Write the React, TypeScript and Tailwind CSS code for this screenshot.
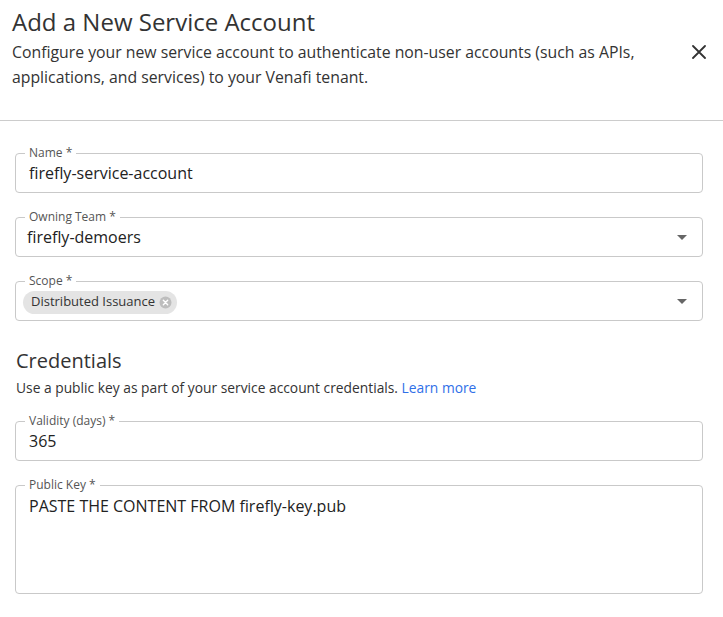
import React from "react";

function Field({
  label,
  children,
  heightClass = "h-[40px]",
  select = false,
}: {
  label: string;
  children: React.ReactNode;
  heightClass?: string;
  select?: boolean;
}) {
  return (
    <div className={`relative ml-[15px] mr-[20px] ${heightClass} rounded-[4px] border border-[#c9c9c9] flex items-center pl-[13px] pr-[14px]`}>
      <span className="absolute -top-[8px] left-[9px] bg-white px-[4px] text-[12px] leading-[14px] text-[#555]">
        {label}
      </span>
      <div className="flex-1 min-w-0">{children}</div>
      {select && (
        <svg width="10" height="5" viewBox="0 0 10 5" className="shrink-0 mr-[1px]">
          <path d="M0 0 L10 0 L5 5 Z" fill="#666" />
        </svg>
      )}
    </div>
  );
}

export default function App() {
  return (
    <div className="w-[723px] h-[617px] bg-white text-[#333] overflow-hidden" style={{ fontFamily: '"Open Sans", "Noto Sans", sans-serif' }}>
      <div className="flex pl-[12px] pr-[17px] pt-[5px]">
        <div className="flex-1">
          <h1 className="text-[24px] leading-[34px] font-normal text-[#333]">Add a New Service Account</h1>
          <p className="text-[15.8px] leading-[25px] text-[#333] mt-[1px] whitespace-nowrap">
            Configure your new service account to authenticate non-user accounts (such as APIs,
            <br />
            applications, and services) to your Venafi tenant.
          </p>
        </div>
        <div className="pt-[40px]">
          <svg width="14" height="14" viewBox="0 0 14 14">
            <path d="M1 1 L13 13 M13 1 L1 13" stroke="#333" strokeWidth="1.8" strokeLinecap="round" />
          </svg>
        </div>
      </div>
      <div className="mt-[30px] h-px bg-[#cccccc]" />

      <div className="pt-[32px] flex flex-col">
        <Field label="Name *">
          <span className="text-[16px] text-[#222]">firefly-service-account</span>
        </Field>
        <div className="h-[24px]" />
        <Field label="Owning Team *" select>
          <span className="text-[16px] text-[#222] -ml-[2px]">firefly-demoers</span>
        </Field>
        <div className="h-[24px]" />
        <Field label="Scope *" select>
          <span className="-ml-[6px] inline-flex items-center h-[23px] rounded-full bg-[#e4e4e4] pl-[8px] pr-[5px] text-[13px] text-[#333]">
            Distributed Issuance
            <svg width="13" height="13" viewBox="0 0 24 24" className="ml-[4px]">
              <circle cx="12" cy="12" r="11" fill="#bdbdbd" />
              <path d="M8 8 L16 16 M16 8 L8 16" stroke="#fff" strokeWidth="2.6" strokeLinecap="round" />
            </svg>
          </span>
        </Field>

        <div className="pl-[16px] pt-[26px]">
          <h2 className="text-[20px] leading-[28px] text-[#333]">Credentials</h2>
          <p className="text-[13.8px] leading-[22px] text-[#333] mt-[2px]">
            Use a public key as part of your service account credentials.{" "}
            <span className="text-[#2f6fe8]">Learn more</span>
          </p>
        </div>
        <div className="h-[22px]" />
        <Field label="Validity (days) *">
          <span className="text-[16px] text-[#222]">365</span>
        </Field>
        <div className="h-[24px]" />
        <Field label="Public Key *" heightClass="h-[109px] !items-start pt-[8px]">
          <span className="text-[16px] text-[#222]">PASTE THE CONTENT FROM firefly-key.pub</span>
        </Field>
      </div>
    </div>
  );
}
